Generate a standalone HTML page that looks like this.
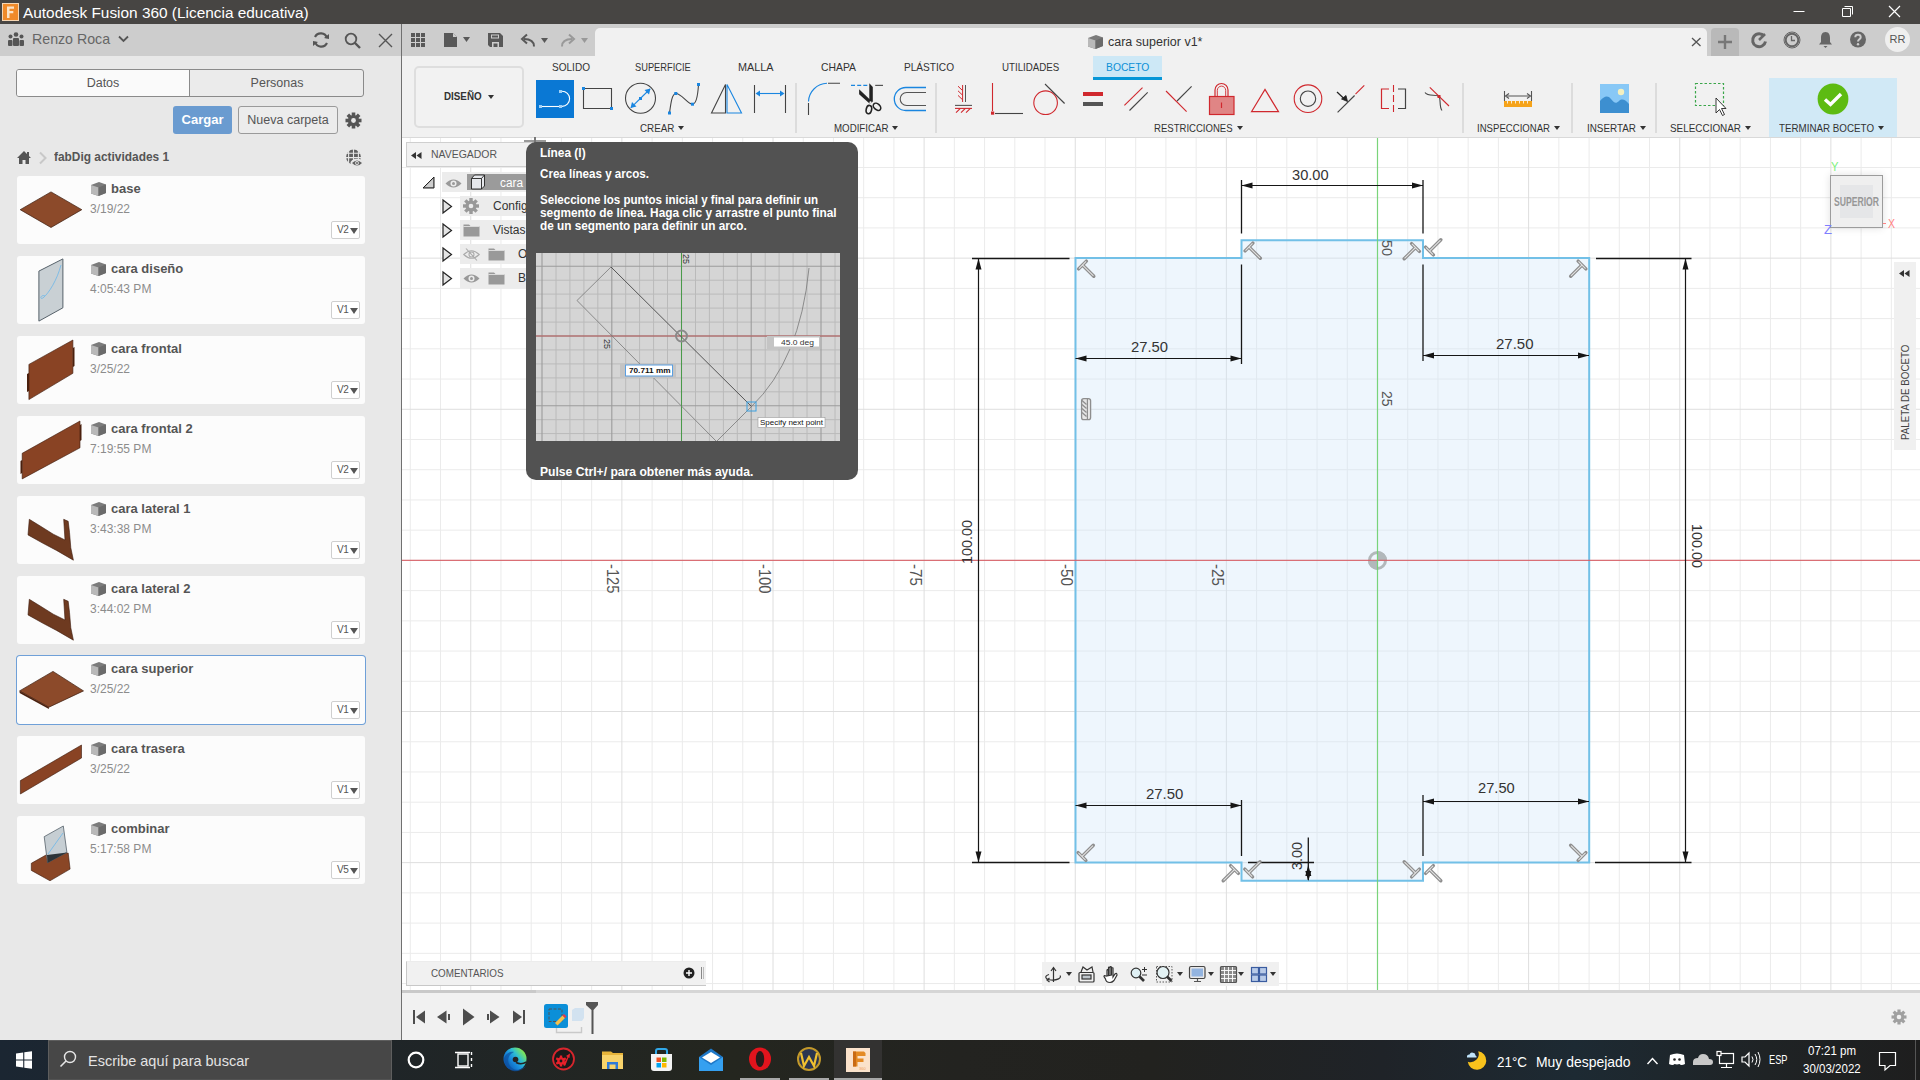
<!DOCTYPE html>
<html><head><meta charset="utf-8">
<style>
*{box-sizing:border-box;margin:0;padding:0}
html,body{width:1920px;height:1080px;overflow:hidden;background:#fff;font-family:"Liberation Sans",sans-serif}
.a{position:absolute}
svg{overflow:visible}
.card{position:absolute;left:17px;width:348px;height:68px;background:#fcfcfc;border-radius:3px}
.card .th{position:absolute;left:0;top:0;width:68px;height:68px}
.card .nm{position:absolute;left:94px;top:5px;font-size:13px;font-weight:bold;color:#555;white-space:nowrap}
.card .dt{position:absolute;left:73px;top:26px;font-size:12px;color:#8c8c8c;white-space:nowrap}
.card .ver{position:absolute;left:314px;top:45px;width:29px;height:18px;border:1px solid #cfcfcf;border-radius:2px;background:#fff;font-size:10px;color:#555;padding:2px 0 0 5px;line-height:12px;letter-spacing:-0.3px}
.card .ver:after{content:"";position:absolute;right:1.5px;top:6px;border-left:4px solid transparent;border-right:4px solid transparent;border-top:6px solid #555}
.card .cube{position:absolute;left:73px;top:5px}
.card.sel{box-shadow:0 0 0 1px #6fa0d8}
.tb{position:absolute;font-size:11px;color:#333;white-space:nowrap;line-height:12px}
.grp{position:absolute;top:121px;font-size:11px;color:#333;white-space:nowrap;line-height:14px}
.grp i{display:inline-block;margin-left:3px;vertical-align:2px;border-left:3.5px solid transparent;border-right:3.5px solid transparent;border-top:5px solid #333}
.vsep{position:absolute;top:83px;width:2px;height:50px;background:#dadada}
.tt{position:absolute;left:540px;color:#fff;font-size:12px;font-weight:bold;white-space:nowrap}

</style></head><body>
<div class="a" style="left:0;top:0;width:1920px;height:24px;background:#474543"></div>
<svg class="a" style="left:2px;top:3px" width="17" height="18" viewBox="0 0 17 18">
<rect x="0" y="0" width="17" height="18" fill="#f6d6b3"/><rect x="1" y="1" width="15" height="16" fill="#f08a2a"/>
<path d="M5 3.5h7v2.3H7.5v2.3h3.8v2.2H7.5V15H5z" fill="#fbe3c8"/>
</svg>
<div class="a" style="left:23px;top:4px;font-size:15.4px;line-height:18px;color:#fff;white-space:nowrap">Autodesk Fusion 360 (Licencia educativa)</div>
<svg class="a" style="left:1790px;top:5px" width="120" height="14">
<path d="M3.5 6.5H14.5" stroke="#fff" stroke-width="1"/>
<path d="M52.5 3.5h8v8h-8z M54.5 1.5h8v8" stroke="#fff" fill="none" stroke-width="1"/>
<path d="M99 1L110 12M110 1L99 12" stroke="#fff" stroke-width="1.2"/>
</svg>
<div class="a" style="left:0;top:24px;width:401px;height:1016px;background:#e8e8e8"></div>
<div class="a" style="left:0;top:24px;width:401px;height:32px;background:#cdcdcd"></div>
<svg class="a" style="left:7px;top:32px" width="18" height="14" viewBox="0 0 18 14"><circle cx="9" cy="2.5" r="2.3" fill="#555"/><circle cx="3.5" cy="4.5" r="2" fill="#555"/><circle cx="14.5" cy="4.5" r="2" fill="#555"/><rect x="6" y="6" width="6" height="8" rx="1" fill="#555"/><rect x="1" y="8" width="4.5" height="6" rx="1" fill="#555"/><rect x="12.5" y="8" width="4.5" height="6" rx="1" fill="#555"/></svg>
<div class="a" style="left:32px;top:31px;font-size:14.2px;line-height:17px;color:#666;white-space:nowrap">Renzo Roca</div>
<svg class="a" style="left:118px;top:35px" width="11" height="8"><path d="M1 1.5L5.5 6L10 1.5" stroke="#555" stroke-width="1.8" fill="none"/></svg>
<svg class="a" style="left:312px;top:32px" width="18" height="16" viewBox="0 0 18 16"><path d="M15 6A6.5 6.5 0 0 0 3 5" stroke="#555" stroke-width="2.2" fill="none"/><path d="M3 10A6.5 6.5 0 0 0 15 11" stroke="#555" stroke-width="2.2" fill="none"/><path d="M12 6L17 7L17 2Z" fill="#555"/><path d="M6 10L1 9L1 14Z" fill="#555"/></svg>
<svg class="a" style="left:344px;top:32px" width="18" height="17"><circle cx="7" cy="7" r="5.3" stroke="#555" stroke-width="1.8" fill="none"/><path d="M11 11L16 16" stroke="#555" stroke-width="2.4"/></svg>
<svg class="a" style="left:378px;top:33px" width="15" height="15"><path d="M1 1L14 14M14 1L1 14" stroke="#555" stroke-width="1.4"/></svg>
<div class="a" style="left:16px;top:69px;width:348px;height:28px;border:1px solid #8a8a8a;border-radius:3px;background:#ebebeb;overflow:hidden"><div class="a" style="left:0;top:0;width:173px;height:26px;background:#fafafa;border-right:1px solid #8a8a8a"></div></div>
<div class="a" style="left:16px;top:76px;width:174px;text-align:center;font-size:12.5px;color:#555">Datos</div>
<div class="a" style="left:190px;top:76px;width:174px;text-align:center;font-size:12.5px;color:#555">Personas</div>
<div class="a" style="left:173px;top:106px;width:59px;height:28px;background:#6a9bd0;border-radius:3px;color:#fff;font-weight:bold;font-size:13px;text-align:center;line-height:28px">Cargar</div>
<div class="a" style="left:238px;top:106px;width:100px;height:28px;border:1px solid #9a9a9a;border-radius:3px;background:#ececec;color:#555;font-size:12.5px;text-align:center;line-height:26px">Nueva carpeta</div>
<svg class="a" style="left:345px;top:112px" width="17" height="17" viewBox="0 0 17 17"><g transform="translate(8.5 8.5)"><g fill="#555"><rect x="-1.8" y="-8" width="3.6" height="16"/><rect x="-1.8" y="-8" width="3.6" height="16" transform="rotate(45)"/><rect x="-1.8" y="-8" width="3.6" height="16" transform="rotate(90)"/><rect x="-1.8" y="-8" width="3.6" height="16" transform="rotate(135)"/></g><circle r="5.6" fill="#555"/><circle r="2.4" fill="#e8e8e8"/></g></svg>
<svg class="a" style="left:16px;top:150px" width="16" height="15" viewBox="0 0 16 15"><path d="M8 1L1 8H3V14H6.5V10H9.5V14H13V8H15Z" fill="#555"/><rect x="11" y="2" width="2" height="4" fill="#555"/></svg>
<svg class="a" style="left:38px;top:151px" width="10" height="14"><path d="M2 1.5L7.5 7L2 12.5" stroke="#c8c8c8" stroke-width="2" fill="none"/></svg>
<div class="a" style="left:54px;top:150px;font-size:12.6px;font-weight:bold;color:#555;white-space:nowrap;transform:scaleX(0.945);transform-origin:0 0">fabDig actividades 1</div>
<svg class="a" style="left:340px;top:145px" width="26" height="25"><g transform="translate(-340 -145)"><circle cx="353.5" cy="156.9" r="7.4" fill="#606060"/><path d="M348.6 149V165M353.5 149V165M358.4 149V165M346 153.3H361M346 157.6H361" stroke="#e7e7e7" stroke-width="1.1"/><ellipse cx="357" cy="163" rx="6.6" ry="4.3" fill="#e7e7e7"/><path d="M352 163Q357 158 362 163Q357 168 352 163Z" fill="#606060"/><circle cx="357" cy="163" r="1.9" fill="#e7e7e7"/><circle cx="357" cy="163" r="1" fill="#606060"/></g></svg>
<div class="card" style="top:176px"><svg class="th" width="68" height="68"><path d="M3.2 33.7L34 15.9L64.8 33.7L34 51.5Z" fill="#8c4a2a" stroke="#3a1a0c" stroke-width="0.7"/></svg><svg class="cube" width="17" height="16" viewBox="0 0 17 16"><path d="M1 4L9 1L16 3.5L16 12L8.5 15L1 12.5Z" fill="#7b7b7b"/><path d="M1 4L8.5 6.5L8.5 15L1 12.5Z" fill="#b9b9b9"/><path d="M8.5 6.5L16 3.5L16 12L8.5 15Z" fill="#6b6b6b"/></svg><div class="nm">base</div><div class="dt">3/19/22</div><div class="ver">V2</div></div>
<div class="card" style="top:256px"><svg class="th" width="68" height="68"><path d="M21.9 15.1L45.9 2.9L45.9 51.8L21.9 65.1Z" fill="#c9d0d4" stroke="#56616a" stroke-width="1"/><path d="M44 9C40 24 32 37 26 42C22 44 24 38 28 40" stroke="#6cb8ea" fill="none" stroke-width="0.8"/></svg><svg class="cube" width="17" height="16" viewBox="0 0 17 16"><path d="M1 4L9 1L16 3.5L16 12L8.5 15L1 12.5Z" fill="#7b7b7b"/><path d="M1 4L8.5 6.5L8.5 15L1 12.5Z" fill="#b9b9b9"/><path d="M8.5 6.5L16 3.5L16 12L8.5 15Z" fill="#6b6b6b"/></svg><div class="nm">cara diseño</div><div class="dt">4:05:43 PM</div><div class="ver">V1</div></div>
<div class="card" style="top:336px"><svg class="th" width="68" height="68"><path d="M11.9 28.4L55.9 4L55.9 37.3L11.9 63.6Z" fill="#894324" stroke="#3a1a0c" stroke-width="0.6"/><path d="M10 38L12 37L12 55L10 56Z M55.9 12L57.5 11L57.5 30L55.9 31Z" fill="#4a200e"/></svg><svg class="cube" width="17" height="16" viewBox="0 0 17 16"><path d="M1 4L9 1L16 3.5L16 12L8.5 15L1 12.5Z" fill="#7b7b7b"/><path d="M1 4L8.5 6.5L8.5 15L1 12.5Z" fill="#b9b9b9"/><path d="M8.5 6.5L16 3.5L16 12L8.5 15Z" fill="#6b6b6b"/></svg><div class="nm">cara frontal</div><div class="dt">3/25/22</div><div class="ver">V2</div></div>
<div class="card" style="top:416px"><svg class="th" width="68" height="68"><path d="M5.2 37.3L63 5L63 31.8L5.2 62.9Z" fill="#894324" stroke="#3a1a0c" stroke-width="0.6"/><path d="M3.5 45L5.2 44L5.2 57L3.5 58Z M63 9L64.5 8L64.5 24L63 25Z" fill="#4a200e"/></svg><svg class="cube" width="17" height="16" viewBox="0 0 17 16"><path d="M1 4L9 1L16 3.5L16 12L8.5 15L1 12.5Z" fill="#7b7b7b"/><path d="M1 4L8.5 6.5L8.5 15L1 12.5Z" fill="#b9b9b9"/><path d="M8.5 6.5L16 3.5L16 12L8.5 15Z" fill="#6b6b6b"/></svg><div class="nm">cara frontal 2</div><div class="dt">7:19:55 PM</div><div class="ver">V2</div></div>
<div class="card" style="top:496px"><svg class="th" width="68" height="68"><path d="M12.3 23.3L24 30.5L36.3 38.2L48 44L46.7 23.3L51.2 25.3L52.5 36.3L53.8 51.8L56.4 64.2L39.5 54.4L26 47.3L11 38.9Z" fill="#6e3a20" stroke="#3a1a0c" stroke-width="0.6"/></svg><svg class="cube" width="17" height="16" viewBox="0 0 17 16"><path d="M1 4L9 1L16 3.5L16 12L8.5 15L1 12.5Z" fill="#7b7b7b"/><path d="M1 4L8.5 6.5L8.5 15L1 12.5Z" fill="#b9b9b9"/><path d="M8.5 6.5L16 3.5L16 12L8.5 15Z" fill="#6b6b6b"/></svg><div class="nm">cara lateral 1</div><div class="dt">3:43:38 PM</div><div class="ver">V1</div></div>
<div class="card" style="top:576px"><svg class="th" width="68" height="68"><path d="M12.3 23.3L24 30.5L36.3 38.2L48 44L46.7 23.3L51.2 25.3L52.5 36.3L53.8 51.8L56.4 64.2L39.5 54.4L26 47.3L11 38.9Z" fill="#6e3a20" stroke="#3a1a0c" stroke-width="0.6"/></svg><svg class="cube" width="17" height="16" viewBox="0 0 17 16"><path d="M1 4L9 1L16 3.5L16 12L8.5 15L1 12.5Z" fill="#7b7b7b"/><path d="M1 4L8.5 6.5L8.5 15L1 12.5Z" fill="#b9b9b9"/><path d="M8.5 6.5L16 3.5L16 12L8.5 15Z" fill="#6b6b6b"/></svg><div class="nm">cara lateral 2</div><div class="dt">3:44:02 PM</div><div class="ver">V1</div></div>
<div class="card sel" style="top:656px"><svg class="th" width="68" height="68"><path d="M2.6 34.9L36 15.4L66.5 34.9L31.9 51.2Z" fill="#8c4a2a" stroke="#3a1a0c" stroke-width="0.7"/><path d="M2.6 34.9L31.9 51.2L31.9 53L2.6 37Z" fill="#4a200e"/></svg><svg class="cube" width="17" height="16" viewBox="0 0 17 16"><path d="M1 4L9 1L16 3.5L16 12L8.5 15L1 12.5Z" fill="#7b7b7b"/><path d="M1 4L8.5 6.5L8.5 15L1 12.5Z" fill="#b9b9b9"/><path d="M8.5 6.5L16 3.5L16 12L8.5 15Z" fill="#6b6b6b"/></svg><div class="nm">cara superior</div><div class="dt">3/25/22</div><div class="ver">V1</div></div>
<div class="card" style="top:736px"><svg class="th" width="68" height="68"><path d="M3.4 44.6L64.5 9L64.5 22L3.4 58Z" fill="#894324" stroke="#3a1a0c" stroke-width="0.6"/></svg><svg class="cube" width="17" height="16" viewBox="0 0 17 16"><path d="M1 4L9 1L16 3.5L16 12L8.5 15L1 12.5Z" fill="#7b7b7b"/><path d="M1 4L8.5 6.5L8.5 15L1 12.5Z" fill="#b9b9b9"/><path d="M8.5 6.5L16 3.5L16 12L8.5 15Z" fill="#6b6b6b"/></svg><div class="nm">cara trasera</div><div class="dt">3/25/22</div><div class="ver">V1</div></div>
<div class="card" style="top:816px"><svg class="th" width="68" height="68"><path d="M14.3 47.3L29 39L51.2 37L53.1 53.1L33 64.8L14.3 54.4Z" fill="#8a4626" stroke="#3a1a0c" stroke-width="0.6"/><path d="M27.2 20.7L46.3 10L49.9 36.3L30.5 46.7Z" fill="#c6ced3" stroke="#56616a" stroke-width="0.8"/><path d="M30 39L50 36.5L30.5 47Z" fill="#2e3438"/><path d="M31 38L46 17" stroke="#6cb8ea" stroke-width="0.8"/></svg><svg class="cube" width="17" height="16" viewBox="0 0 17 16"><path d="M1 4L9 1L16 3.5L16 12L8.5 15L1 12.5Z" fill="#7b7b7b"/><path d="M1 4L8.5 6.5L8.5 15L1 12.5Z" fill="#b9b9b9"/><path d="M8.5 6.5L16 3.5L16 12L8.5 15Z" fill="#6b6b6b"/></svg><div class="nm">combinar</div><div class="dt">5:17:58 PM</div><div class="ver">V5</div></div><div class="a" style="left:402px;top:24px;width:1518px;height:32px;background:#cdcdcd"></div>
<div class="a" style="left:402px;top:56px;width:1518px;height:82px;background:#f1f1f1"></div>
<div class="a" style="left:595px;top:28px;width:1112px;height:28px;background:#f1f1f1;border-radius:5px 5px 0 0"></div>
<svg class="a" style="left:411px;top:33px" width="15" height="15"><g fill="#585858"><rect x="0" y="0" width="4" height="4"/><rect x="5" y="0" width="4" height="4"/><rect x="10" y="0" width="4" height="4"/><rect x="0" y="5" width="4" height="4"/><rect x="5" y="5" width="4" height="4"/><rect x="10" y="5" width="4" height="4"/><rect x="0" y="10" width="4" height="4"/><rect x="5" y="10" width="4" height="4"/><rect x="10" y="10" width="4" height="4"/></g></svg>
<svg class="a" style="left:443px;top:32px" width="30" height="16"><path d="M1 1H10L14 5V15H1Z" fill="#585858"/><path d="M10 1V5H14" fill="#cdcdcd"/><path d="M10.5 0.5L14.5 4.5" stroke="#cdcdcd"/><path d="M20 5H27L23.5 10Z" fill="#585858"/></svg>
<svg class="a" style="left:488px;top:33px" width="16" height="15"><path d="M0 0H12L15 3V14H2L0 12Z" fill="#585858"/><rect x="3" y="1.5" width="8" height="4" fill="#cdcdcd"/><rect x="4" y="2.5" width="6" height="2" fill="#585858"/><path d="M4 14V9H11V14H9.5V10.5H5.5V14Z" fill="#cdcdcd"/></svg>
<svg class="a" style="left:521px;top:34px" width="30" height="13"><path d="M13 12.5C13 6.5 9 5 3 5" stroke="#585858" stroke-width="2" fill="none"/><path d="M6 0.5L1 5L6 9.5" stroke="#585858" stroke-width="2" fill="none"/><path d="M20 4H27L23.5 9Z" fill="#585858"/></svg>
<svg class="a" style="left:561px;top:34px" width="30" height="13"><path d="M1 12.5C1 6.5 5 5 11 5" stroke="#999" stroke-width="2" fill="none"/><path d="M8 0.5L13 5L8 9.5" stroke="#999" stroke-width="2" fill="none"/><path d="M20 4H27L23.5 9Z" fill="#999"/></svg>
<svg class="a" style="left:1087px;top:34px" width="17" height="16" viewBox="0 0 17 16"><path d="M1 4L9 1L16 3.5L16 12L8.5 15L1 12.5Z" fill="#7b7b7b"/><path d="M1 4L8.5 6.5L8.5 15L1 12.5Z" fill="#b9b9b9"/><path d="M8.5 6.5L16 3.5L16 12L8.5 15Z" fill="#6b6b6b"/></svg>
<div class="a" style="left:1108px;top:35px;font-size:12.5px;line-height:15px;color:#333;white-space:nowrap">cara superior v1*</div>
<svg class="a" style="left:1691px;top:37px" width="11" height="10"><path d="M1 1L9.5 9M9.5 1L1 9" stroke="#555" stroke-width="1.3"/></svg>
<div class="a" style="left:1711px;top:28px;width:28px;height:28px;background:#b9b9b9;border-radius:4px 4px 0 0"></div>
<svg class="a" style="left:1718px;top:35px" width="15" height="15"><path d="M7 0V14M0 7H14" stroke="#777" stroke-width="2.4"/></svg>
<svg class="a" style="left:1751px;top:32px" width="17" height="17"><path d="M13.2 4.2A6.5 6.5 0 1 0 14.5 9.5" stroke="#666" stroke-width="3" fill="none"/><path d="M8 8L14 2" stroke="#666" stroke-width="2.5"/></svg>
<svg class="a" style="left:1783px;top:31px" width="18" height="18"><circle cx="9" cy="9" r="8" stroke="#666" stroke-width="1" fill="none"/><circle cx="9" cy="9" r="6.3" stroke="#666" stroke-width="2" fill="none"/><path d="M8.5 5V9.5H12" stroke="#666" stroke-width="1.3" fill="none"/></svg>
<svg class="a" style="left:1818px;top:31px" width="15" height="18"><path d="M7.5 1C4 1 3 4 3 7V11L1 13.5H14L12 11V7C12 4 11 1 7.5 1Z" fill="#666"/><path d="M5.5 15H9.5L7.5 17Z" fill="#666"/></svg>
<svg class="a" style="left:1850px;top:31px" width="17" height="17"><circle cx="8" cy="8.5" r="8" fill="#666"/><path d="M5.3 6.3C5.3 3 10.7 3 10.7 6.3C10.7 8.3 8 8.3 8 10.5" stroke="#cdcdcd" stroke-width="2" fill="none"/><circle cx="8" cy="13.2" r="1.2" fill="#cdcdcd"/></svg>
<div class="a" style="left:1885px;top:27px;width:25px;height:25px;border-radius:50%;background:#efefef;font-size:11px;color:#555;text-align:center;line-height:25px">RR</div>
<div class="a" style="left:401px;top:24px;width:1px;height:1016px;background:#707070"></div>
<div class="a" style="left:414px;top:66px;width:110px;height:62px;border:2px solid #dedede;border-radius:5px;background:#f2f2f2"></div>
<div class="a" style="left:444px;top:90px;font-size:11px;line-height:12px;color:#333;white-space:nowrap;font-weight:bold;transform:scaleX(0.8915);transform-origin:0 0;">DISEÑO</div>
<svg class="a" style="left:487.5px;top:95px" width="6" height="4"><path d="M0 0H6L3.0 4Z" fill="#333"/></svg>
<div class="a" style="left:552px;top:61px;font-size:11px;line-height:12px;color:#333;white-space:nowrap;transform:scaleX(0.9142);transform-origin:0 0;">SOLIDO</div>
<div class="a" style="left:635px;top:61px;font-size:11px;line-height:12px;color:#333;white-space:nowrap;transform:scaleX(0.8438);transform-origin:0 0;">SUPERFICIE</div>
<div class="a" style="left:738.3px;top:61px;font-size:11px;line-height:12px;color:#333;white-space:nowrap;transform:scaleX(0.9841);transform-origin:0 0;">MALLA</div>
<div class="a" style="left:821px;top:61px;font-size:11px;line-height:12px;color:#333;white-space:nowrap;transform:scaleX(0.9439);transform-origin:0 0;">CHAPA</div>
<div class="a" style="left:904px;top:61px;font-size:11px;line-height:12px;color:#333;white-space:nowrap;transform:scaleX(0.9191);transform-origin:0 0;">PLÁSTICO</div>
<div class="a" style="left:1002.4px;top:61px;font-size:11px;line-height:12px;color:#333;white-space:nowrap;transform:scaleX(0.8844);transform-origin:0 0;">UTILIDADES</div>
<div class="a" style="left:1093px;top:56px;width:69px;height:24px;background:#cde8f6;border-bottom:3px solid #0696d7"></div>
<div class="a" style="left:1105.6px;top:61px;font-size:11px;line-height:12px;color:#0e90d6;white-space:nowrap;transform:scaleX(0.9384);transform-origin:0 0;">BOCETO</div>
<div class="a" style="left:1769px;top:78px;width:128px;height:59px;background:#d1e9f6"></div>
<div class="a" style="left:639.6px;top:121px;font-size:11px;line-height:14px;color:#333;white-space:nowrap;transform:scaleX(0.8934);transform-origin:0 0;">CREAR</div>
<svg class="a" style="left:677.5px;top:125.5px" width="6" height="4"><path d="M0 0H6L3.0 4Z" fill="#333"/></svg>
<div class="a" style="left:833.5px;top:121px;font-size:11px;line-height:14px;color:#333;white-space:nowrap;transform:scaleX(0.8830);transform-origin:0 0;">MODIFICAR</div>
<svg class="a" style="left:891.5px;top:125.5px" width="6" height="4"><path d="M0 0H6L3.0 4Z" fill="#333"/></svg>
<div class="a" style="left:1154.4px;top:121px;font-size:11px;line-height:14px;color:#333;white-space:nowrap;transform:scaleX(0.8689);transform-origin:0 0;">RESTRICCIONES</div>
<svg class="a" style="left:1236.5px;top:125.5px" width="6" height="4"><path d="M0 0H6L3.0 4Z" fill="#333"/></svg>
<div class="a" style="left:1477px;top:121px;font-size:11px;line-height:14px;color:#333;white-space:nowrap;transform:scaleX(0.8718);transform-origin:0 0;">INSPECCIONAR</div>
<svg class="a" style="left:1554px;top:125.5px" width="6" height="4"><path d="M0 0H6L3.0 4Z" fill="#333"/></svg>
<div class="a" style="left:1587px;top:121px;font-size:11px;line-height:14px;color:#333;white-space:nowrap;transform:scaleX(0.8974);transform-origin:0 0;">INSERTAR</div>
<svg class="a" style="left:1639.5px;top:125.5px" width="6" height="4"><path d="M0 0H6L3.0 4Z" fill="#333"/></svg>
<div class="a" style="left:1670px;top:121px;font-size:11px;line-height:14px;color:#333;white-space:nowrap;transform:scaleX(0.9004);transform-origin:0 0;">SELECCIONAR</div>
<svg class="a" style="left:1744.5px;top:125.5px" width="6" height="4"><path d="M0 0H6L3.0 4Z" fill="#333"/></svg>
<div class="a" style="left:1779px;top:121px;font-size:11px;line-height:14px;color:#333;white-space:nowrap;transform:scaleX(0.8899);transform-origin:0 0;">TERMINAR BOCETO</div>
<svg class="a" style="left:1877.5px;top:125.5px" width="6" height="4"><path d="M0 0H6L3.0 4Z" fill="#333"/></svg>
<div class="a" style="left:795px;top:83px;width:2px;height:50px;background:#dcdcdc"></div>
<div class="a" style="left:935px;top:83px;width:2px;height:50px;background:#dcdcdc"></div>
<div class="a" style="left:1462px;top:83px;width:2px;height:50px;background:#dcdcdc"></div>
<div class="a" style="left:1571px;top:83px;width:2px;height:50px;background:#dcdcdc"></div>
<div class="a" style="left:1655px;top:83px;width:2px;height:50px;background:#dcdcdc"></div>
<div class="a" style="left:402px;top:137px;width:1518px;height:1px;background:#d9d9d9"></div>
<div class="a" style="left:536px;top:80px;width:38px;height:38px;background:#0a78d4"></div>
<svg class="a" style="left:0;top:0" width="1920" height="140">
<g fill="none" stroke-width="1.1">
<path d="M541 106.5H560" stroke="#fff"/>
<path d="M562 91.2A7.6 7.6 0 0 1 562 106.4" stroke="#fff"/>
<path d="M583.5 88.5H611.5V108.5H583.5Z" stroke="#444"/>
<circle cx="640.5" cy="98.3" r="15" stroke="#444"/>
<path d="M631 107.6L650 89" stroke="#1a86e0"/>
<path d="M669.5 113C671 102 672 94 675.8 93.5C681 93 688 104.5 692.5 104.2C696.5 104 698 93 698.5 84.5" stroke="#444"/>
<path d="M711.5 113L725.5 84.5V113Z" stroke="#444"/>
<path d="M727 84.5L741.5 113H727Z" stroke="#1a86e0"/>
<path d="M754.5 85V113M785.5 85V113" stroke="#444"/>
<path d="M757 93.5H783" stroke="#1a86e0"/>
<path d="M808.5 101.5A19 19 0 0 1 827 83.3" stroke="#1a86e0"/>
<path d="M828 83.3H840M808.5 103V115" stroke="#444"/>
<path d="M851 85.4H855M857.2 85.4H861.2M863.3 85.4H867.3" stroke="#1a86e0" stroke-width="1.2"/>
<path d="M875.2 85.4H883" stroke="#555" stroke-width="1.2"/>
<path d="M926 87.5H905.8A11.5 11.5 0 0 0 905.8 110.5H926" stroke="#1a86e0" stroke-width="1.3"/>
<path d="M926 92.5H906.7A6.5 6.5 0 0 0 906.7 105.5H926" stroke="#555" stroke-width="1.1"/>
<path d="M965.5 85V102" stroke="#555" stroke-width="1"/>
<path d="M962.6 85V102" stroke="#d0282e" stroke-width="1"/>
<path d="M958 86.2L962.6 90.6M958 90.8L962.6 95.2M958 95.4L962.6 99.8" stroke="#d0282e" stroke-width="1"/>
<path d="M955 105.4H972" stroke="#555" stroke-width="1.1"/>
<path d="M955 108.4H972" stroke="#d0282e" stroke-width="1.1"/>
<path d="M956 112.6L960.4 108.4M961 112.6L965.4 108.4M966 112.6L970.4 108.4" stroke="#d0282e" stroke-width="1.1"/>
<path d="M992.5 83V111" stroke="#d0282e"/>
<path d="M995 113.5H1023" stroke="#444"/>
<circle cx="1045.6" cy="102.7" r="11.8" stroke="#d0282e"/>
<path d="M1045 84L1064.6 103.5" stroke="#444"/>
<path d="M1124.4 105.3L1142.5 87.6" stroke="#d0282e"/>
<path d="M1129.5 110.5L1147.7 92.3" stroke="#444"/>
<path d="M1166 91L1186.6 111.7" stroke="#d0282e"/>
<path d="M1177 101L1191.6 86.4" stroke="#444"/>
<path d="M1215 96V90A6.5 6.5 0 0 1 1228 90V96" stroke="#d0282e" stroke-width="1.2"/>
<path d="M1217.3 96V90.3A4.2 4.2 0 0 1 1225.7 90.3V96" stroke="#d0282e" stroke-width="0.9"/>
<rect x="1209.5" y="96.5" width="24.5" height="18" fill="#e08585" stroke="#d0282e" stroke-width="1.2"/>
<path d="M1221.5 102.5V108" stroke="#d0282e" stroke-width="1.2"/>
<path d="M1251.5 111.7L1265 89.5L1278.5 111.7Z" stroke="#d0282e" stroke-width="1.2"/>
<circle cx="1308" cy="98.7" r="13.8" stroke="#d0282e" stroke-width="1.1"/>
<circle cx="1308" cy="98.7" r="7.7" stroke="#444" stroke-width="1.1"/>
<path d="M1337.6 112.4L1354.6 95.5" stroke="#444"/>
<path d="M1355.5 94.2L1364.3 85.3" stroke="#d0282e"/>
<path d="M1337 92L1345 99.5" stroke="#222" stroke-width="1.2"/>
<path d="M1341.5 99L1347.5 101.5L1346 95.5Z" fill="#222" stroke="#222" stroke-width="0.8"/>
<path d="M1389 89H1381.5V108.5H1389" stroke="#d0282e" stroke-width="1.2"/>
<path d="M1393.5 85V113" stroke="#d0282e" stroke-width="1.1" stroke-dasharray="7 3"/>
<path d="M1398 89H1405.5V108.5H1398" stroke="#444" stroke-width="1.2"/>
<path d="M1429.8 87.3L1449 106" stroke="#d0282e"/>
<path d="M1425 92.5C1428 97 1436 94 1439 96.5C1441 99 1439 107 1442 110.5" stroke="#444"/>
<path d="M1504.5 91V101M1531.5 91V101M1506 96H1530" stroke="#555"/>
<path d="M1509 93.5L1505.5 96L1509 98.5M1527 93.5L1530.5 96L1527 98.5" stroke="#555"/>
<path d="M1695.5 83.5H1723.5V105.5H1695.5Z" stroke="#3aa64a" stroke-dasharray="2.5 2" stroke-width="1.2"/>
</g>
<g fill="#9fd0f7"><rect x="539" y="105" width="3" height="3"/><rect x="559" y="105" width="3" height="3"/><rect x="559" y="90" width="3" height="3"/></g>
<g fill="#1a86e0"><rect x="582" y="87" width="3" height="3"/><rect x="610" y="107" width="3" height="3"/>
<rect x="639" y="97" width="3" height="3"/><path d="M650.5 88.5L644.5 90L649 94.5Z M630.5 108L636.5 106.5L632 102Z"/>
<rect x="668" y="111.5" width="3" height="3"/><rect x="674.3" y="92" width="3" height="3"/><rect x="691" y="102.7" width="3" height="3"/><rect x="697" y="83" width="3" height="3"/>
<path d="M755.5 93.5L760 90.5V96.5Z M784.5 93.5L780 90.5V96.5Z"/></g>
<rect x="991" y="111.5" width="3.2" height="3.2" fill="#d0282e"/>
<rect x="1083" y="92" width="20" height="4" fill="#d0282e"/><rect x="1083" y="102" width="20" height="4" fill="#555"/>
<rect x="1437.5" y="95" width="3" height="3" fill="#d0282e"/>
<g fill="#232323"><path d="M859.1 89.3L859.1 94.2L869.5 103.5L871.5 101Z"/><path d="M869.3 83.3L872.8 87.1V101.5L870.5 103.5L869.3 100Z"/>
<ellipse cx="868.9" cy="109.6" rx="2.7" ry="4.2" fill="none" stroke="#232323" stroke-width="1.6" transform="rotate(12 868.9 109.6)"/>
<ellipse cx="877" cy="106.8" rx="2.9" ry="4.3" fill="none" stroke="#232323" stroke-width="1.6" transform="rotate(-48 877 106.8)"/></g>
<circle cx="870.5" cy="102.3" r="1.1" fill="#f1f1f1"/>
<rect x="1504" y="101" width="28" height="6" fill="#f5a31a"/>
<path d="M1507.5 101V103.5M1511.5 101V103.5M1515.5 101V103.5M1519.5 101V103.5M1523.5 101V103.5M1527.5 101V103.5" stroke="#fff" stroke-width="0.8"/>
<rect x="1600" y="84" width="29" height="29" fill="#88c8f6"/>
<path d="M1600 113V101C1604 96 1608 95 1611 99C1614 103 1616 104 1619 101C1622 98 1626 100 1629 104V113Z" fill="#3d8fd0"/>
<circle cx="1621" cy="92" r="3.2" fill="#f4f0c0"/>
<path d="M1716 98V113L1719.5 109.5L1722.5 115.5L1724.5 114.5L1721.5 108.5L1726 108.5Z" fill="#fff" stroke="#222" stroke-width="0.9"/>
<circle cx="1833" cy="99" r="15.4" fill="#5dbb12"/>
<path d="M1825 99.5L1830.5 104.5L1841 94" stroke="#fff" stroke-width="3.4" fill="none"/>
</svg><div class="a" style="left:402px;top:138px;width:1518px;height:852px;background:#fff"></div>
<svg class="a" style="left:0;top:0" width="1920" height="1080"><path d="M410.3 138V990M440.52 138V990M500.98 138V990M531.2 138V990M561.42 138V990M591.65 138V990M652.1 138V990M682.33 138V990M712.55 138V990M742.77 138V990M803.23 138V990M833.45 138V990M863.67 138V990M893.9 138V990M954.35 138V990M984.58 138V990M1014.8 138V990M1045.03 138V990M1105.47 138V990M1135.7 138V990M1165.92 138V990M1196.15 138V990M1256.6 138V990M1286.83 138V990M1317.05 138V990M1347.28 138V990M1407.72 138V990M1437.95 138V990M1468.17 138V990M1498.4 138V990M1558.85 138V990M1589.08 138V990M1619.3 138V990M1649.53 138V990M1709.97 138V990M1740.2 138V990M1770.42 138V990M1800.65 138V990M1861.1 138V990M1891.33 138V990M402 983.55H1920M402 953.33H1920M402 923.1H1920M402 892.88H1920M402 832.42H1920M402 802.2H1920M402 771.97H1920M402 741.75H1920M402 681.3H1920M402 651.07H1920M402 620.85H1920M402 590.62H1920M402 530.17H1920M402 499.95H1920M402 469.72H1920M402 439.5H1920M402 379.05H1920M402 348.82H1920M402 318.6H1920M402 288.38H1920M402 227.92H1920M402 197.7H1920M402 167.47H1920" stroke="#ebebeb" stroke-width="1" fill="none"/><path d="M470.75 138V990M621.88 138V990M773.0 138V990M924.12 138V990M1075.25 138V990M1226.38 138V990M1377.5 138V990M1528.62 138V990M1679.75 138V990M1830.88 138V990M402 862.65H1920M402 711.52H1920M402 560.4H1920M402 409.27H1920M402 258.15H1920" stroke="#dedede" stroke-width="1" fill="none"/><path d="M1075.5 258.1H1241.5V240.2H1423V258.1H1589.2V862.6H1423V880.8H1241.5V862.6H1075.5Z" fill="#cfe6f8" fill-opacity="0.35"/><path d="M1075.5 258.1H1241.5V240.2H1423V258.1H1589.2V862.6H1423V880.8H1241.5V862.6H1075.5Z" fill="none" stroke="#72c0e7" stroke-width="2"/><circle cx="1377.5" cy="560.4" r="8" fill="none" stroke="#b2b8bb" stroke-width="3"/><path d="M1377.5 560.4V550.9A9.5 9.5 0 0 1 1387 560.4Z M1377.5 560.4V569.9A9.5 9.5 0 0 1 1368 560.4Z" fill="#b2b8bb"/><path d="M402 560.4H1920" stroke="#d85a62" stroke-opacity="0.85" stroke-width="1.2"/><path d="M1377.5 138V990" stroke="#6fd36f" stroke-opacity="0.9" stroke-width="1.2"/><path d="M1241.5 185.5H1423" stroke="#161616" stroke-width="1.2"/><path d="M1241.5 185.5L1252.5 182.5V188.5Z" fill="#161616"/><path d="M1423 185.5L1412 182.5V188.5Z" fill="#161616"/><path d="M1241.5 180L1241.5 233.5" stroke="#161616" stroke-width="1.3"/><path d="M1423 180L1423 233.5" stroke="#161616" stroke-width="1.3"/><path d="M1075.5 358.5H1241.5" stroke="#161616" stroke-width="1.2"/><path d="M1075.5 358.5L1086.5 355.5V361.5Z" fill="#161616"/><path d="M1241.5 358.5L1230.5 355.5V361.5Z" fill="#161616"/><path d="M1241.5 264.5L1241.5 364" stroke="#161616" stroke-width="1.3"/><path d="M1423 355.5H1589" stroke="#161616" stroke-width="1.2"/><path d="M1423 355.5L1434 352.5V358.5Z" fill="#161616"/><path d="M1589 355.5L1578 352.5V358.5Z" fill="#161616"/><path d="M1423 264.5L1423 361" stroke="#161616" stroke-width="1.3"/><path d="M978.5 258.5V862.5" stroke="#161616" stroke-width="1.2"/><path d="M978.5 258.5L975.5 269.5H981.5Z" fill="#161616"/><path d="M978.5 862.5L975.5 851.5H981.5Z" fill="#161616"/><path d="M972 258.5L1069.5 258.5" stroke="#161616" stroke-width="1.3"/><path d="M972 862.5L1069.5 862.5" stroke="#161616" stroke-width="1.3"/><path d="M1685.5 258.5V862.5" stroke="#161616" stroke-width="1.2"/><path d="M1685.5 258.5L1682.5 269.5H1688.5Z" fill="#161616"/><path d="M1685.5 862.5L1682.5 851.5H1688.5Z" fill="#161616"/><path d="M1596 258.5L1691.5 258.5" stroke="#161616" stroke-width="1.3"/><path d="M1595 862.5L1691.5 862.5" stroke="#161616" stroke-width="1.3"/><path d="M1075.5 805.5H1241.5" stroke="#161616" stroke-width="1.2"/><path d="M1075.5 805.5L1086.5 802.5V808.5Z" fill="#161616"/><path d="M1241.5 805.5L1230.5 802.5V808.5Z" fill="#161616"/><path d="M1241.5 800L1241.5 856" stroke="#161616" stroke-width="1.3"/><path d="M1423 801.5H1589" stroke="#161616" stroke-width="1.2"/><path d="M1423 801.5L1434 798.5V804.5Z" fill="#161616"/><path d="M1589 801.5L1578 798.5V804.5Z" fill="#161616"/><path d="M1423 795L1423 856" stroke="#161616" stroke-width="1.3"/><path d="M1248 862.5L1314 862.5" stroke="#161616" stroke-width="1.3"/><path d="M1308.3 837.5V880" stroke="#161616" stroke-width="1.3"/><path d="M1308.3 881L1305.3 871H1311.3Z" fill="#161616"/><path d="M1308.3 865L1305.3 876H1311.3Z" fill="#161616"/><g transform="translate(1082.5 265) rotate(-45)"><path d="M-5.5 0H5.5M0 0V16" stroke="#8e8e8e" stroke-width="3.4" stroke-linecap="round" fill="none"/><path d="M-5 0H5M0 0.5V15.5" stroke="#e2e2e2" stroke-width="1.1" fill="none"/></g><g transform="translate(1249 247) rotate(-45)"><path d="M-5.5 0H5.5M0 0V16" stroke="#8e8e8e" stroke-width="3.4" stroke-linecap="round" fill="none"/><path d="M-5 0H5M0 0.5V15.5" stroke="#e2e2e2" stroke-width="1.1" fill="none"/></g><g transform="translate(1415.5 247.5) rotate(45)"><path d="M-5.5 0H5.5M0 0V16" stroke="#8e8e8e" stroke-width="3.4" stroke-linecap="round" fill="none"/><path d="M-5 0H5M0 0.5V15.5" stroke="#e2e2e2" stroke-width="1.1" fill="none"/></g><g transform="translate(1429.5 251) rotate(-135)"><path d="M-5.5 0H5.5M0 0V16" stroke="#8e8e8e" stroke-width="3.4" stroke-linecap="round" fill="none"/><path d="M-5 0H5M0 0.5V15.5" stroke="#e2e2e2" stroke-width="1.1" fill="none"/></g><g transform="translate(1582 265) rotate(45)"><path d="M-5.5 0H5.5M0 0V16" stroke="#8e8e8e" stroke-width="3.4" stroke-linecap="round" fill="none"/><path d="M-5 0H5M0 0.5V15.5" stroke="#e2e2e2" stroke-width="1.1" fill="none"/></g><g transform="translate(1082 856.5) rotate(-135)"><path d="M-5.5 0H5.5M0 0V16" stroke="#8e8e8e" stroke-width="3.4" stroke-linecap="round" fill="none"/><path d="M-5 0H5M0 0.5V15.5" stroke="#e2e2e2" stroke-width="1.1" fill="none"/></g><g transform="translate(1582 856.5) rotate(135)"><path d="M-5.5 0H5.5M0 0V16" stroke="#8e8e8e" stroke-width="3.4" stroke-linecap="round" fill="none"/><path d="M-5 0H5M0 0.5V15.5" stroke="#e2e2e2" stroke-width="1.1" fill="none"/></g><g transform="translate(1234.5 869.5) rotate(45)"><path d="M-5.5 0H5.5M0 0V16" stroke="#8e8e8e" stroke-width="3.4" stroke-linecap="round" fill="none"/><path d="M-5 0H5M0 0.5V15.5" stroke="#e2e2e2" stroke-width="1.1" fill="none"/></g><g transform="translate(1248.7 873) rotate(-135)"><path d="M-5.5 0H5.5M0 0V16" stroke="#8e8e8e" stroke-width="3.4" stroke-linecap="round" fill="none"/><path d="M-5 0H5M0 0.5V15.5" stroke="#e2e2e2" stroke-width="1.1" fill="none"/></g><g transform="translate(1415.5 873) rotate(135)"><path d="M-5.5 0H5.5M0 0V16" stroke="#8e8e8e" stroke-width="3.4" stroke-linecap="round" fill="none"/><path d="M-5 0H5M0 0.5V15.5" stroke="#e2e2e2" stroke-width="1.1" fill="none"/></g><g transform="translate(1429.5 869.5) rotate(-45)"><path d="M-5.5 0H5.5M0 0V16" stroke="#8e8e8e" stroke-width="3.4" stroke-linecap="round" fill="none"/><path d="M-5 0H5M0 0.5V15.5" stroke="#e2e2e2" stroke-width="1.1" fill="none"/></g><rect x="1081.6" y="398.6" width="9" height="21" rx="2.2" fill="#e6e6e6" stroke="#8e8e8e" stroke-width="1.3"/><path d="M1087.4 399V419.5" stroke="#8e8e8e" stroke-width="1.2"/><path d="M1082 400.5L1086.5 404.5M1082 404.5L1086.5 408.5M1082 408.5L1086.5 412.5M1082 412.5L1086.5 416.5" stroke="#8e8e8e" stroke-width="1.3"/></svg>
<div class="a" style="left:621.34px;top:563.60px;font-size:16px;line-height:18px;color:#555;white-space:nowrap;transform:rotate(90deg) scaleX(0.9212);transform-origin:0 0">-125</div>
<div class="a" style="left:772.74px;top:563.60px;font-size:16px;line-height:18px;color:#555;white-space:nowrap;transform:rotate(90deg) scaleX(0.9212);transform-origin:0 0">-100</div>
<div class="a" style="left:923.74px;top:563.60px;font-size:16px;line-height:18px;color:#555;white-space:nowrap;transform:rotate(90deg) scaleX(0.9427);transform-origin:0 0">-75</div>
<div class="a" style="left:1074.54px;top:563.60px;font-size:16px;line-height:18px;color:#555;white-space:nowrap;transform:rotate(90deg) scaleX(0.9427);transform-origin:0 0">-50</div>
<div class="a" style="left:1225.94px;top:563.60px;font-size:16px;line-height:18px;color:#555;white-space:nowrap;transform:rotate(90deg) scaleX(0.9427);transform-origin:0 0">-25</div>
<div class="a" style="left:1396.30px;top:390.50px;font-size:15px;line-height:17px;color:#555;white-space:nowrap;transform:rotate(90deg) scaleX(0.9290);transform-origin:0 0">25</div>
<div class="a" style="left:1396.30px;top:239.50px;font-size:15px;line-height:17px;color:#555;white-space:nowrap;transform:rotate(90deg) scaleX(0.9590);transform-origin:0 0">50</div>
<div class="a" style="left:1291.70px;top:165.53px;font-size:15.5px;line-height:18px;color:#333;white-space:nowrap;transform:scaleX(0.9436);transform-origin:0 0">30.00</div>
<div class="a" style="left:1130.50px;top:337.93px;font-size:15.5px;line-height:18px;color:#333;white-space:nowrap;transform:scaleX(0.9539);transform-origin:0 0">27.50</div>
<div class="a" style="left:1495.80px;top:334.53px;font-size:15.5px;line-height:18px;color:#333;white-space:nowrap;transform:scaleX(0.9668);transform-origin:0 0">27.50</div>
<div class="a" style="left:1146.40px;top:784.53px;font-size:15.5px;line-height:18px;color:#333;white-space:nowrap;transform:scaleX(0.9642);transform-origin:0 0">27.50</div>
<div class="a" style="left:1478.30px;top:779.03px;font-size:15.5px;line-height:18px;color:#333;white-space:nowrap;transform:scaleX(0.9462);transform-origin:0 0">27.50</div>
<div class="a" style="left:958.43px;top:564.00px;font-size:15.5px;line-height:18px;color:#333;white-space:nowrap;transform:rotate(-90deg) scaleX(0.9281);transform-origin:0 0">100.00</div>
<div class="a" style="left:1705.77px;top:524.00px;font-size:15.5px;line-height:18px;color:#333;white-space:nowrap;transform:rotate(90deg) scaleX(0.9281);transform-origin:0 0">100.00</div>
<div class="a" style="left:1287.83px;top:870.00px;font-size:15.5px;line-height:18px;color:#333;white-space:nowrap;transform:rotate(-90deg) scaleX(0.9282);transform-origin:0 0">3.00</div><div class="a" style="left:406px;top:142px;width:130px;height:25px;background:#f1f1f1;border:1px solid #cfcfcf"></div>
<svg class="a" style="left:411px;top:152px" width="11" height="7"><path d="M0 3.5L5 0V7Z M5.5 3.5L10.5 0V7Z" fill="#333"/></svg>
<div class="a" style="left:431.00px;top:148.06px;font-size:11px;line-height:13px;color:#555;white-space:nowrap;transform:scaleX(0.9500);transform-origin:0 0">NAVEGADOR</div>
<svg class="a" style="left:422px;top:176px" width="13" height="13"><path d="M12 1V12H1Z" fill="#999" stroke="#222" stroke-width="1"/><path d="M11 3V11H3Z" fill="#cfcfcf"/></svg>
<div class="a" style="left:442px;top:172px;width:90px;height:20px;background:#ececec"></div>
<svg class="a" style="left:445px;top:178px" width="17" height="11"><path d="M0.5 5.5Q8.5 -2.5 16.5 5.5Q8.5 13.5 0.5 5.5Z" fill="#999"/><circle cx="8.5" cy="5.5" r="3" fill="#ececec"/><circle cx="8.5" cy="5.5" r="1.5" fill="#999"/></svg>
<div class="a" style="left:467px;top:174px;width:65px;height:16px;background:#9b9b9b"></div>
<svg class="a" style="left:470px;top:174px" width="16" height="16"><path d="M1.5 4.5L4.5 1H14.5V12L11.5 15H1.5Z" fill="#e6e8ec" stroke="#222" stroke-width="0.9"/><path d="M1.5 4.5H11.5V15M11.5 4.5L14.5 1" stroke="#222" stroke-width="0.9" fill="none"/></svg>
<div class="a" style="left:500.00px;top:176.23px;font-size:12px;line-height:14px;color:#fff;white-space:nowrap;transform:scaleX(0.9853);transform-origin:0 0">cara</div>
<svg class="a" style="left:442px;top:199px" width="11" height="15"><path d="M1 1L9.5 7.5L1 14Z" fill="#e4e4e4" stroke="#222" stroke-width="1.2"/></svg>
<div class="a" style="left:460px;top:196px;width:72px;height:20px;background:#ececec"></div>
<svg class="a" style="left:463px;top:198px" width="16" height="16" viewBox="0 0 16 16"><g transform="translate(8 8)" fill="#999"><rect x="-1.7" y="-8" width="3.4" height="16"/><rect x="-1.7" y="-8" width="3.4" height="16" transform="rotate(45)"/><rect x="-1.7" y="-8" width="3.4" height="16" transform="rotate(90)"/><rect x="-1.7" y="-8" width="3.4" height="16" transform="rotate(135)"/><circle r="5.5"/><circle r="2.3" fill="#ececec"/></g></svg>
<div class="a" style="left:493px;top:199px;font-size:12px;line-height:14px;color:#333;white-space:nowrap">Configu</div>
<svg class="a" style="left:442px;top:223px" width="11" height="15"><path d="M1 1L9.5 7.5L1 14Z" fill="#e4e4e4" stroke="#222" stroke-width="1.2"/></svg>
<div class="a" style="left:460px;top:220px;width:72px;height:20px;background:#ececec"></div>
<svg class="a" style="left:463px;top:223px" width="17" height="14"><path d="M0.5 1.5H6L7.5 3H16.5V13.5H0.5Z" fill="#999"/><path d="M0.5 3.5H16.5" stroke="#ececec" stroke-width="0.8"/></svg>
<div class="a" style="left:493px;top:223px;font-size:12px;line-height:14px;color:#333;white-space:nowrap">Vistas</div>
<svg class="a" style="left:442px;top:247px" width="11" height="15"><path d="M1 1L9.5 7.5L1 14Z" fill="#e4e4e4" stroke="#222" stroke-width="1.2"/></svg>
<div class="a" style="left:460px;top:244px;width:72px;height:20px;background:#ececec"></div>
<svg class="a" style="left:463px;top:248px" width="17" height="13"><path d="M0.8 6.5Q8.5 -1 16.2 6.5Q8.5 14 0.8 6.5Z" fill="none" stroke="#aaa" stroke-width="1.1"/><circle cx="8.5" cy="6.5" r="2.5" fill="none" stroke="#aaa" stroke-width="1.1"/><path d="M3 0.5L14 12.5" stroke="#aaa" stroke-width="1.1"/></svg>
<svg class="a" style="left:488px;top:247px" width="17" height="14"><path d="M0.5 1.5H6L7.5 3H16.5V13.5H0.5Z" fill="#999"/><path d="M0.5 3.5H16.5" stroke="#ececec" stroke-width="0.8"/></svg>
<div class="a" style="left:518px;top:247px;font-size:12px;line-height:14px;color:#333;white-space:nowrap">O</div>
<svg class="a" style="left:442px;top:271px" width="11" height="15"><path d="M1 1L9.5 7.5L1 14Z" fill="#e4e4e4" stroke="#222" stroke-width="1.2"/></svg>
<div class="a" style="left:460px;top:268px;width:72px;height:20px;background:#ececec"></div>
<svg class="a" style="left:463px;top:273px" width="17" height="11"><path d="M0.5 5.5Q8.5 -2.5 16.5 5.5Q8.5 13.5 0.5 5.5Z" fill="#999"/><circle cx="8.5" cy="5.5" r="3" fill="#ececec"/><circle cx="8.5" cy="5.5" r="1.5" fill="#999"/></svg>
<svg class="a" style="left:488px;top:271px" width="17" height="14"><path d="M0.5 1.5H6L7.5 3H16.5V13.5H0.5Z" fill="#999"/><path d="M0.5 3.5H16.5" stroke="#ececec" stroke-width="0.8"/></svg>
<div class="a" style="left:518px;top:271px;font-size:12px;line-height:14px;color:#333;white-space:nowrap">B</div>
<div class="a" style="left:524px;top:140px;width:22px;height:2px;background:#9a9a9a"></div>
<div class="a" style="left:534px;top:137px;width:2px;height:6px;background:#777"></div>
<div class="a" style="left:526px;top:142px;width:332px;height:338px;background:#525252;border-radius:10px"></div>
<div class="a" style="left:540.00px;top:146.23px;font-size:12px;line-height:14px;color:#fff;white-space:nowrap;font-weight:bold;transform:scaleX(0.9913);transform-origin:0 0">Línea (l)</div>
<div class="a" style="left:540.00px;top:167.23px;font-size:12px;line-height:14px;color:#fff;white-space:nowrap;font-weight:bold;transform:scaleX(0.9669);transform-origin:0 0">Crea líneas y arcos.</div>
<div class="a" style="left:540.00px;top:193.23px;font-size:12px;line-height:14px;color:#fff;white-space:nowrap;font-weight:bold;transform:scaleX(0.9628);transform-origin:0 0">Seleccione los puntos inicial y final para definir un</div>
<div class="a" style="left:540.00px;top:206.13px;font-size:12px;line-height:14px;color:#fff;white-space:nowrap;font-weight:bold;transform:scaleX(0.9884);transform-origin:0 0">segmento de línea. Haga clic y arrastre el punto final</div>
<div class="a" style="left:540.00px;top:219.13px;font-size:12px;line-height:14px;color:#fff;white-space:nowrap;font-weight:bold;transform:scaleX(0.9815);transform-origin:0 0">de un segmento para definir un arco.</div>
<div class="a" style="left:540.00px;top:464.83px;font-size:12px;line-height:14px;color:#fff;white-space:nowrap;font-weight:bold;transform:scaleX(1.0105);transform-origin:0 0">Pulse Ctrl+/ para obtener más ayuda.</div>
<svg class="a" style="left:0;top:0" width="1920" height="1080"><defs><clipPath id="ic"><rect x="536" y="253" width="304" height="188"/></clipPath></defs><g clip-path="url(#ic)"><rect x="536" y="253" width="304" height="188" fill="#d5d5d5"/><path d="M556.0 253V441M569.9 253V441M583.9 253V441M597.8 253V441M625.7 253V441M536 280.2H840M639.6 253V441M536 294.1H840M653.6 253V441M536 308.1H840M667.5 253V441M536 322.1H840M695.5 253V441M536 349.9H840M709.4 253V441M536 363.9H840M723.4 253V441M536 377.9H840M737.3 253V441M536 391.8H840M765.2 253V441M536 419.7H840M779.1 253V441M536 433.6H840M793.1 253V441M807.0 253V441M835.0 253V441" stroke="#bababa" stroke-width="1"/><path d="M542.0 253V441M611.8 253V441M536 266.2H840M681.5 253V441M536 336.0H840M751.2 253V441M536 405.8H840M821.0 253V441" stroke="#9c9c9c" stroke-width="1.1"/><path d="M536 336H840" stroke="#b85a5a" stroke-width="1"/><path d="M681.5 253V441" stroke="#4a9a4a" stroke-width="1"/><path d="M611 267L751.5 406.5" stroke="#555" stroke-width="1"/><path d="M577 300.5L611 267M577 300.5L716 441M751.5 406.5L716 442" stroke="#777" stroke-width="0.8"/><path d="M751.5 406.5Q800 360 809 268" stroke="#777" stroke-width="0.8" fill="none"/><circle cx="681.5" cy="336" r="5.5" fill="none" stroke="#8a8a8a" stroke-width="2"/><rect x="747" y="402" width="9" height="9" fill="none" stroke="#3aa0e0" stroke-width="1"/><rect x="620" y="364" width="56" height="14" fill="#c4c4c4"/><rect x="625.5" y="365" width="47" height="11" fill="#fff" stroke="#5a9ee0" stroke-width="1"/><rect x="767" y="336" width="53" height="13" fill="#c4c4c4"/><rect x="774" y="337.5" width="45" height="9" fill="#fff"/><rect x="758" y="417.5" width="67" height="10" fill="#fff" stroke="#999" stroke-width="0.6"/></g></svg>
<div class="a" style="left:628.50px;top:365.96px;font-size:8px;line-height:9px;color:#111;white-space:nowrap;font-weight:bold;transform:scaleX(1.0253);transform-origin:0 0">70.711 mm</div>
<div class="a" style="left:781.00px;top:337.96px;font-size:8px;line-height:9px;color:#333;white-space:nowrap;transform:scaleX(1.0597);transform-origin:0 0">45.0 deg</div>
<div class="a" style="left:760.00px;top:417.96px;font-size:8px;line-height:9px;color:#111;white-space:nowrap;transform:scaleX(0.9976);transform-origin:0 0">Specify next point</div>
<div class="a" style="left:691.12px;top:254.00px;font-size:9px;line-height:10px;color:#333;white-space:nowrap;transform:rotate(90deg) scaleX(0.9989);transform-origin:0 0">25</div>
<div class="a" style="left:611.62px;top:339.00px;font-size:9px;line-height:10px;color:#333;white-space:nowrap;transform:rotate(90deg) scaleX(0.9989);transform-origin:0 0">25</div><div class="a" style="left:1830px;top:175px;width:53px;height:53px;background:#efefef;border:1px solid #9c9c9c;box-shadow:0 0 8px rgba(0,0,0,0.12)"></div>
<div class="a" style="left:1840px;top:185px;width:33px;height:33px;background:#e5e6e8"></div>
<div class="a" style="left:1834.00px;top:195.43px;font-size:12px;line-height:14px;color:#979797;white-space:nowrap;font-weight:bold;transform:scaleX(0.7180);transform-origin:0 0">SUPERIOR</div>
<div class="a" style="left:1831.00px;top:158.80px;font-size:13px;line-height:15px;color:#7ef07e;white-space:nowrap;transform:scaleX(0.8650);transform-origin:0 0">Y</div>
<div class="a" style="left:1887.50px;top:215.80px;font-size:13px;line-height:15px;color:#ff8383;white-space:nowrap;transform:scaleX(0.8073);transform-origin:0 0">X</div>
<div class="a" style="left:1823.50px;top:222.30px;font-size:13px;line-height:15px;color:#7f7fff;white-space:nowrap;transform:scaleX(1.0074);transform-origin:0 0">Z</div>
<div class="a" style="left:1883px;top:222.5px;width:3px;height:1.5px;background:#ff8383"></div>
<div class="a" style="left:1894px;top:262px;width:22px;height:188px;background:#f0f0f0"></div>
<svg class="a" style="left:1899px;top:270px" width="11" height="7"><path d="M0 3.5L5 0V7Z M5.5 3.5L10.5 0V7Z" fill="#333"/></svg>
<div class="a" style="left:1899.49px;top:439.50px;font-size:11px;line-height:13px;color:#444;white-space:nowrap;transform:rotate(-90deg) scaleX(0.8854);transform-origin:0 0">PALETA DE BOCETO</div>
<div class="a" style="left:406px;top:961px;width:300px;height:25px;background:#f1f1f1;border-left:1px solid #c8c8c8;border-bottom:1px solid #c8c8c8;border-top:1px solid #ececec"></div>
<div class="a" style="left:431.00px;top:967.16px;font-size:11px;line-height:13px;color:#555;white-space:nowrap;transform:scaleX(0.8942);transform-origin:0 0">COMENTARIOS</div>
<svg class="a" style="left:683px;top:967px" width="12" height="12"><circle cx="6" cy="6" r="5.5" fill="#222"/><path d="M6 3V9M3 6H9" stroke="#fff" stroke-width="1.4"/></svg>
<div class="a" style="left:701px;top:967px;width:1px;height:12px;background:#888"></div><div class="a" style="left:703px;top:967px;width:1px;height:12px;background:#bbb"></div>
<div class="a" style="left:1042px;top:962px;width:237px;height:24px;background:#f0f0f0"></div>
<svg class="a" style="left:0;top:0" width="1920" height="1080">
<g stroke="#333" fill="none" stroke-width="1.2">
<path d="M1053.5 968V982M1051 971L1053.5 967.5L1056 971"/>
<path d="M1049 974.5C1044 976 1045 979.5 1051 980C1057 980.5 1062 978 1060 975.5"/>
<path d="M1049.5 978L1047 980L1049.5 982"/>
<rect x="1079" y="972.5" width="15" height="9.5" rx="1"/>
<rect x="1082" y="975" width="9" height="4" fill="#bfc6cc"/>
<path d="M1081 972L1083 967L1087 970L1092 967L1093 972"/>
<path d="M1107 976V970.5Q1107 969 1108.5 970V975M1108.5 975V968Q1108.5 966.5 1110 967.5V975M1110 975V967.5Q1110 966 1111.5 967V975M1111.5 975V968Q1111.5 967 1113 968V977L1115 974Q1117 972.5 1117 975L1114 980.5Q1112 982.5 1110 982.5Q1106 982.5 1105.5 979L1104 976.5Q1104 975 1106 976Z" fill="#fff"/>
<circle cx="1136" cy="973" r="4.8" fill="#dff0f4"/>
<path d="M1139.5 976.5L1144 981" stroke-width="2.6"/>
<path d="M1142 969.5H1147M1144.5 967V972M1142 975H1147" stroke-width="1"/>
<circle cx="1163" cy="972.5" r="6" fill="#e3f2f4"/>
<path d="M1167 976.5L1171.5 981" stroke-width="2.6"/>
<rect x="1156.5" y="966.5" width="15.5" height="15.5" stroke-dasharray="1.5 1.5" stroke-width="0.8"/>
<rect x="1189.5" y="966.5" width="15.5" height="12" rx="1.5" fill="#e8e8e8" stroke="#444"/>
<rect x="1191.5" y="968.5" width="11.5" height="8" fill="#93b4e0" stroke="none"/>
<path d="M1194 981.5H1201M1197.5 979V981.5" stroke="#555"/>
<rect x="1220.5" y="966.5" width="16" height="16" rx="1" fill="#8a8a8a" stroke="#555"/>
<path d="M1224.5 967V982M1228.5 967V982M1232.5 967V982M1221 970.5H1236M1221 974.5H1236M1221 978.5H1236" stroke="#fff" stroke-width="0.9"/>
<rect x="1251.5" y="967.5" width="7" height="6.5" fill="#b9cbe8" stroke="#3a5ca0"/>
<rect x="1259.5" y="967.5" width="7" height="6.5" fill="#b9cbe8" stroke="#3a5ca0"/>
<rect x="1251.5" y="975" width="7" height="6.5" fill="#b9cbe8" stroke="#3a5ca0"/>
<rect x="1259.5" y="975" width="7" height="6.5" fill="#b9cbe8" stroke="#3a5ca0"/>
</g>
<g fill="#333"><path d="M1066 972H1072L1069 976Z M1177 972H1183L1180 976Z M1208 972H1214L1211 976Z M1238 972H1244L1241 976Z M1270 972H1276L1273 976Z"/></g>
</svg>
<div class="a" style="left:402px;top:990px;width:1518px;height:50px;background:#f1f1f1"></div>
<div class="a" style="left:402px;top:990px;width:1518px;height:3px;background:#d6d6d6"></div>
<div class="a" style="left:402px;top:990px;width:134px;height:3px;background:#c9c9c9"></div>
<svg class="a" style="left:0;top:0" width="1920" height="1080"><g fill="#4d4d4d">
<rect x="413" y="1010" width="2" height="14"/><path d="M416 1017L425 1010.5V1023.5Z"/>
<path d="M437 1017L446.5 1010.5V1023.5Z"/><rect x="448" y="1014" width="2" height="6"/>
<path d="M463 1008.5L474.5 1017L463 1025.5Z"/>
<rect x="487" y="1014" width="2" height="6"/><path d="M490 1010.5L499.5 1017L490 1023.5Z"/>
<path d="M513 1010.5L522 1017L513 1023.5Z"/><rect x="523" y="1010" width="2" height="14"/>
</g>
<rect x="544" y="1004" width="24" height="24" rx="2.5" fill="#0b8fd8"/>
<rect x="549" y="1009" width="13" height="12.5" fill="none" stroke="#555" stroke-width="1" stroke-dasharray="3 1.5"/>
<path d="M555 1023L562.5 1015.5L565 1018L557.5 1025.5Z" fill="#f5c04a"/><path d="M562.5 1015.5L564 1014L566.5 1016.5L565 1018Z" fill="#e34"/>
<path d="M572 1010L575 1008H584V1018L582 1021H572Z" fill="#d2e2f0"/>
<path d="M556.5 1028V1032.5H581.5V1027" fill="none" stroke="#c9c9c9" stroke-width="1.4"/>
<path d="M586 1002H598V1005L593.5 1010V1034H591.5V1010L586 1005Z" fill="#555"/>
</svg>
<svg class="a" style="left:1891px;top:1009px" width="16" height="16" viewBox="0 0 16 16"><g transform="translate(8 8)" fill="#a0a0a0"><rect x="-1.6" y="-7.5" width="3.2" height="15"/><rect x="-1.6" y="-7.5" width="3.2" height="15" transform="rotate(45)"/><rect x="-1.6" y="-7.5" width="3.2" height="15" transform="rotate(90)"/><rect x="-1.6" y="-7.5" width="3.2" height="15" transform="rotate(135)"/><circle r="5.3"/><circle r="2.3" fill="#f1f1f1"/></g></svg>
<div class="a" style="left:0;top:1040px;width:1920px;height:40px;background:linear-gradient(90deg,#1b2632 0%,#1f2528 20%,#24261f 38%,#232320 50%,#22221f 60%,#1f2328 72%,#1d2a33 82%,#1f2325 92%,#1e1e1e 100%)"></div>
<svg class="a" style="left:0;top:0" width="1920" height="1080">
<g fill="#fff"><path d="M16 1053.5L23.2 1052.5V1059.5H16Z M24.3 1052.3L32 1051.2V1059.5H24.3Z M16 1060.5H23.2V1067.5L16 1066.5Z M24.3 1060.5H32V1068.8L24.3 1067.7Z"/></g>
<rect x="48.5" y="1040.5" width="343" height="39.5" fill="#474747" stroke="#5e5e5e" stroke-width="1"/>
<circle cx="70" cy="1057" r="5.5" fill="none" stroke="#e6e6e6" stroke-width="1.4"/><path d="M66 1061L60.5 1066.5" stroke="#e6e6e6" stroke-width="1.6"/>
<circle cx="416" cy="1060" r="7.3" fill="none" stroke="#fff" stroke-width="2.2"/>
<g stroke="#fff" stroke-width="1.4" fill="none"><rect x="458" y="1054" width="10" height="12"/><path d="M455 1052.5H470M455 1067.5H470M471.5 1052V1055M471.5 1058V1061M471.5 1064V1067"/></g>
<defs><linearGradient id="edg" x1="0.15" y1="0.95" x2="0.95" y2="0.3"><stop offset="0" stop-color="#0a4fa8"/><stop offset="0.45" stop-color="#1a8fe0"/><stop offset="0.7" stop-color="#30c0cf"/><stop offset="1" stop-color="#7de55a"/></linearGradient></defs>
<circle cx="515" cy="1059" r="11.5" fill="url(#edg)"/>
<path d="M504 1058C506 1053 511 1051 514 1052C509 1054 507 1059 509 1064C511 1069 517 1071 521 1069L526 1066C523 1070 518 1072 513 1071C508 1070 504 1064 504 1058Z" fill="#0d50a0" opacity="0.7"/><circle cx="515.5" cy="1059.5" r="2.8" fill="#242424"/><path d="M516 1062.5C519 1064 523 1064 526.5 1062" stroke="#242424" stroke-width="1.5" fill="none"/>
<circle cx="563.5" cy="1059" r="10.5" fill="#1a1a1a" stroke="#d8262d" stroke-width="1.8"/>
<g transform="translate(561 1061)" fill="#e8202a"><rect x="-1.2" y="-5.5" width="2.4" height="11"/><rect x="-1.2" y="-5.5" width="2.4" height="11" transform="rotate(60)"/><rect x="-1.2" y="-5.5" width="2.4" height="11" transform="rotate(120)"/><circle r="3.8"/><circle r="1.4" fill="#1a1a1a"/></g><path d="M563 1065L567.5 1057L566 1056L570 1053.5L569.5 1058L568.5 1057.5L565 1066Z" fill="#e8202a"/>
<path d="M602 1051.5H611L613 1053H623V1069H602Z" fill="#e7b43a"/><path d="M602 1055H623V1069H602Z" fill="#f8d36b"/>
<rect x="607" y="1062" width="11" height="7" fill="#2f7ad8"/><rect x="609.5" y="1064.5" width="6" height="4.5" fill="#f8d36b"/>
<path d="M651 1054H672V1068Q672 1071 669 1071H654Q651 1071 651 1068Z" fill="#f3f3f3"/><path d="M656 1054V1051Q656 1049 658 1049H665Q667 1049 667 1051V1054" stroke="#31a8e8" stroke-width="2" fill="none"/>
<rect x="656.5" y="1057.5" width="4.5" height="4.5" fill="#f25022"/><rect x="662" y="1057.5" width="4.5" height="4.5" fill="#7fba00"/><rect x="656.5" y="1063" width="4.5" height="4.5" fill="#00a4ef"/><rect x="662" y="1063" width="4.5" height="4.5" fill="#ffb900"/>
<path d="M699 1057L711 1048.5L723 1057V1071H699Z" fill="#1e78c8"/><path d="M699 1057L711 1065L723 1057V1071H699Z" fill="#35a0f0"/><path d="M702 1057.5L711 1052L720 1057.5L711 1063Z" fill="#fff"/>
<ellipse cx="760" cy="1059" rx="11" ry="11.5" fill="#e3141d"/><ellipse cx="760" cy="1059" rx="4.2" ry="8" fill="#2a1b1b"/>
<circle cx="809" cy="1059" r="11" fill="#2b3550" stroke="#c49a2a" stroke-width="2"/><path d="M801 1053L804 1066L809 1057L814 1066L817 1053" stroke="#f0c030" stroke-width="2.2" fill="none"/>
<rect x="834" y="1040" width="48" height="40" fill="#333231"/>
<rect x="846" y="1048" width="24" height="24" fill="#fbe2cb"/>
<path d="M853 1051.5H864L865.5 1053V1056H857.5V1058.5H863.5V1062H857.5V1066.5H853Z" fill="#e48a24"/><path d="M853 1051.5H856V1066.5H853Z" fill="#c96a14"/><text x="859" y="1069.5" font-size="4" fill="#f0a060" font-family="Liberation Sans">360</text>
<path d="M740 1079H780M789 1079H829M834 1079H882" stroke="#a8a8a8" stroke-width="2"/>
<path d="M1478.24 1051.28A9.3 9.3 0 1 1 1467.78 1061.74A8.2 8.2 0 0 0 1478.24 1051.28Z" fill="#f8c21c"/>
<path d="M1467 1057.5Q1466.5 1054.5 1469.5 1054.5Q1470.5 1052 1473 1052.8Q1475.5 1053 1475.5 1055.5Q1477 1056 1476.5 1057.5Z" fill="#bfe3fa"/>
<path d="M1647.5 1064L1652.5 1058.5L1657.5 1064" stroke="#fff" stroke-width="1.4" fill="none"/>
<path d="M1670 1055Q1677 1052 1684 1055L1685 1064Q1681 1066 1679.5 1064L1677 1064.5L1674.5 1064Q1673 1066 1669 1064Z" fill="#fff"/><circle cx="1674.5" cy="1059.5" r="1.3" fill="#222"/><circle cx="1679.5" cy="1059.5" r="1.3" fill="#222"/>
<path d="M1693 1065H1710Q1713 1065 1713 1062Q1713 1059 1709 1059Q1708 1054 1703 1054Q1699 1054 1698 1058Q1693 1058 1693 1062Z" fill="#c8c8c8"/>
<g stroke="#fff" stroke-width="1.2" fill="none"><rect x="1719.5" y="1053.5" width="14" height="10"/><path d="M1726.5 1063.5V1067M1721 1067.5H1732"/><rect x="1717" y="1051.5" width="4" height="4" fill="#222"/></g>
<g stroke="#fff" stroke-width="1.2" fill="none"><path d="M1742 1057H1745L1749 1053V1066L1745 1062H1742Z"/><path d="M1752 1056.5Q1754 1059.5 1752 1062.5M1755 1054Q1758.5 1059.5 1755 1065M1758 1052Q1762 1059.5 1758 1067" stroke-width="1"/></g>
<path d="M1879.5 1052.5H1895.5V1065.5H1890L1885 1070V1065.5H1879.5Z" fill="none" stroke="#fff" stroke-width="1.2"/>
<path d="M1915.5 1040V1080" stroke="#555" stroke-width="1"/>
</svg>
<div class="a" style="left:88.00px;top:1052.04px;font-size:15px;line-height:17px;color:#e3e3e3;white-space:nowrap;transform:scaleX(0.9655);transform-origin:0 0">Escribe aquí para buscar</div>
<div class="a" style="left:1497.00px;top:1052.54px;font-size:15px;line-height:17px;color:#fff;white-space:nowrap;transform:scaleX(0.8951);transform-origin:0 0">21°C</div>
<div class="a" style="left:1535.50px;top:1052.54px;font-size:15px;line-height:17px;color:#fff;white-space:nowrap;transform:scaleX(0.9289);transform-origin:0 0">Muy despejado</div>
<div class="a" style="left:1769.00px;top:1052.93px;font-size:12px;line-height:14px;color:#fff;white-space:nowrap;transform:scaleX(0.7705);transform-origin:0 0">ESP</div>
<div class="a" style="left:1808.00px;top:1043.62px;font-size:12.5px;line-height:14px;color:#fff;white-space:nowrap;transform:scaleX(0.9210);transform-origin:0 0">07:21 pm</div>
<div class="a" style="left:1803.00px;top:1061.62px;font-size:12.5px;line-height:14px;color:#fff;white-space:nowrap;transform:scaleX(0.9223);transform-origin:0 0">30/03/2022</div>
</body></html>
